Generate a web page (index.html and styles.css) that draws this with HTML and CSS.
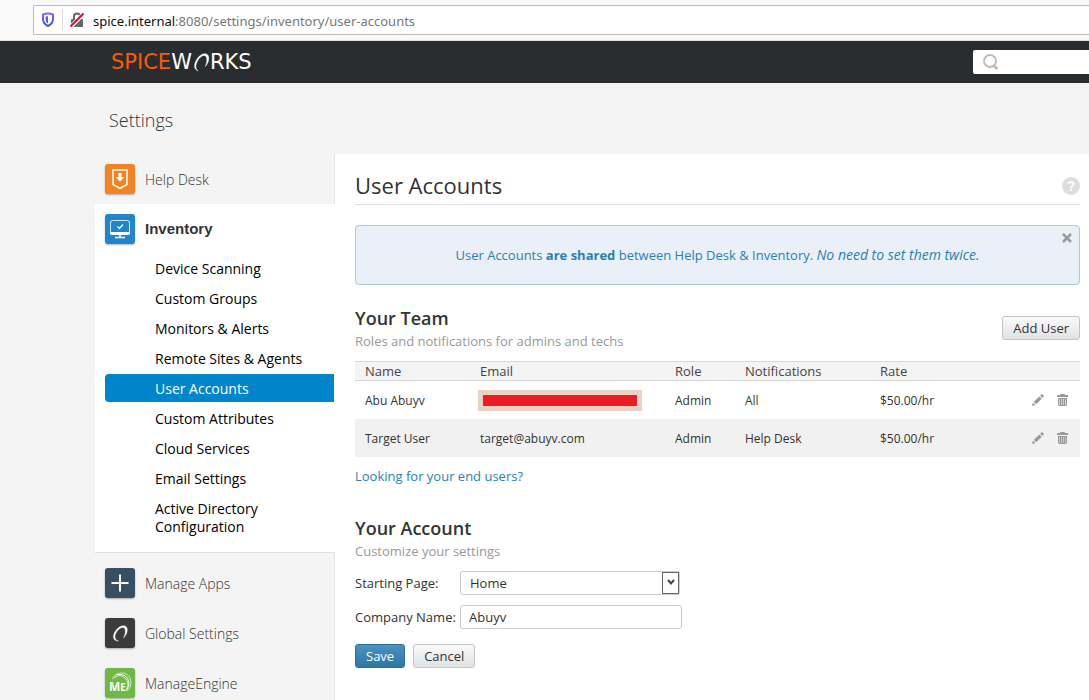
FILE: index.html
```html
<!DOCTYPE html>
<html lang="en">
<head>
<meta charset="utf-8">
<title>User Accounts - Settings</title>
<link rel="stylesheet" href="styles.css">
</head>
<body>
<svg class="defs" aria-hidden="true">
  <symbol id="pencil" viewBox="0 0 12 12"><path d="M0 12l1-3.400 2.400 2.400zM1.800 7.800l5.600-5.400 2.300 2.300-5.500 5.600zM8.200 1.700L9.400.5q.6-.6 1.300 0l.9.9q.6.6 0 1.200L10.400 3.900z"/></symbol>
  <symbol id="trash" viewBox="0 0 11 12"><path d="M3 1q0-1 1-1h3q1 0 1 1h3v2H0V1z"/><path d="M1 4h9v7q0 1-1 1H2q-1 0-1-1z" opacity=".45"/><path d="M1 4h1v7H1zM3 5h1v6H3zM5 5h1v6H5zM7 5h1v6H7zM9 4h1v7H9zM1 4h9v1H1zM2 11h7v1H2z"/></symbol>
</svg>

<div class="browser">
  <div class="address">
    <svg class="shield" viewBox="0 0 14 16" width="14" height="16"><defs><linearGradient id="sg" x2="0" y2="1"><stop stop-color="#9059ff"/><stop offset="1" stop-color="#2b5cd0"/></linearGradient></defs><path d="M2 2.500Q7 .600 12 2.500V7q0 4.500-5 7Q2 11.500 2 7z" fill="none" stroke="url(#sg)" stroke-width="2"/><path d="M7 4v7.500Q4.500 10 4.500 7V4.500z" fill="url(#sg)"/></svg>
    <span class="divider"></span>
    <svg class="lock" viewBox="0 0 14 16" width="14" height="16"><path d="M4 7V4q0-2.500 3-2.500T10 4v3" fill="none" stroke="#666" stroke-width="2"/><rect x="1" y="7" width="12" height="8" rx="1" fill="#666"/><path d="M1 14.500L13.500 2" stroke="#fff" stroke-width="4"/><path d="M.5 14.500L13.500 1.500" stroke="#ff0039" stroke-width="2"/></svg>
    <span class="url"><b>spice.internal</b>:8080/settings/inventory/user-accounts</span>
  </div>
</div>

<header class="topbar">
  <a class="logo" href="#"><span class="spice">SPICE</span>W<svg viewBox="0 0 16 18" width="18" height="20"><path d="M5.500 17C1 16 1.500 10 5 5.500 8.500 .5 14.500 0 15 5c.2 3-1 5.500-3 8 1-3 1.700-5.500 1-8-1-3.500-5-2-7.500 2C3 11 2.500 15.500 5.500 17z" fill="#fff" stroke="#fff" stroke-width=".4"/></svg>RKS</a>
  <label class="search">
    <svg viewBox="0 0 16 16" width="16" height="16" fill="none" stroke="#bbb"><circle cx="7" cy="7" r="6" stroke-width="1.800"/><path d="M10.500 11.500l4 3.500" stroke-width="2.500"/></svg>
    <input type="search" aria-label="Search">
  </label>
</header>

<h1 class="page-title">Settings</h1>

<div class="layout">
  <nav class="sidebar">
    <a class="section" href="#"><span class="tile orange"><svg viewBox="0 0 30 30" width="30" height="30"><path d="M8 6h14v14.500l-7 4-7-4z" fill="none" stroke="#fff" stroke-width="1.500"/><path d="M13.500 9h3v4h3L15 17.500 10.500 13h3z" fill="#fff"/></svg></span>Help Desk</a>
    <div class="group">
      <a class="section current" href="#"><span class="tile blue"><svg viewBox="0 0 30 30" width="30" height="30" fill="none" stroke="#fff"><path d="M5.500 19V9q0-2.500 2-2.500h15q2 0 2 2.500v10" stroke-width="1" opacity=".8"/><path d="M5 18h20v1q0 2-2 2H7q-2 0-2-2z" fill="#fff" stroke="none"/><path d="M12.500 12.500l2 2 3.500-4" stroke-width="1.300"/><path d="M15 21v2.500M10 23.500h10" stroke-width="1.500"/></svg></span>Inventory</a>
      <ul class="submenu">
        <li><a href="#">Device Scanning</a></li>
        <li><a href="#">Custom Groups</a></li>
        <li><a href="#">Monitors &amp; Alerts</a></li>
        <li><a href="#">Remote Sites &amp; Agents</a></li>
        <li><a class="active" href="#">User Accounts</a></li>
        <li><a href="#">Custom Attributes</a></li>
        <li><a href="#">Cloud Services</a></li>
        <li><a href="#">Email Settings</a></li>
        <li><a href="#">Active Directory Configuration</a></li>
      </ul>
    </div>
    <a class="section" href="#"><span class="tile slate"><svg viewBox="0 0 30 30" width="30" height="30"><path d="M15 6.500v17M6.500 15h17" stroke="#fff" stroke-width="2"/></svg></span>Manage Apps</a>
    <a class="section" href="#"><span class="tile dark"><svg viewBox="0 0 30 30" width="30" height="30"><path d="M13.500 23C8 23 7 18 10.500 13c3.500-5.500 10-7 11.500-3 1 3-.5 7-3.500 10 1.500-3 2.500-6.500 1.500-9-1.500-3-6-1-8.500 3-2.500 4-2 8 2 9z" fill="#fff" stroke="#fff" stroke-width=".4"/></svg></span>Global Settings</a>
    <a class="section" href="#"><span class="tile green"><svg viewBox="0 0 30 30" width="30" height="30"><g fill="none" stroke="#fff"><path d="M7 11C12 2 26 3 26 15q0 5-4 8" opacity=".7"/><path d="M9 10q6-5 11 0 5 5 1.500 12" opacity=".8"/><path d="M11 6.500Q23 5 24 15q0 4-3 7.500"/></g><text x="4" y="23" class="me">M<tspan class="me-small">E</tspan></text></svg></span>ManageEngine</a>
  </nav>

  <main class="content">
    <div class="heading">
      <h2>User Accounts</h2>
      <button class="help" type="button" aria-label="Help">?</button>
    </div>

    <div class="notice">
      <p>User Accounts <strong>are shared</strong> between Help Desk &amp; Inventory. <em>No need to set them twice.</em></p>
      <button class="close" type="button" aria-label="Close"><svg viewBox="0 0 10 10" width="10" height="10"><path d="M1 1l8 8M9 1L1 9" stroke="#999" stroke-width="2.500"/></svg></button>
    </div>

    <div class="team-head">
      <div>
        <h3>Your Team</h3>
        <p class="hint">Roles and notifications for admins and techs</p>
      </div>
      <button class="btn" type="button">Add User</button>
    </div>

    <table class="users">
      <colgroup><col class="c-name"><col class="c-email"><col class="c-role"><col class="c-notify"><col class="c-rate"><col class="c-tools"></colgroup>
      <thead><tr><th>Name</th><th>Email</th><th>Role</th><th>Notifications</th><th>Rate</th><th></th></tr></thead>
      <tbody>
        <tr><td>Abu Abuyv</td><td><span class="redacted"></span></td><td>Admin</td><td>All</td><td>$50.00/hr</td>
          <td><div class="tools"><button type="button" aria-label="Edit"><svg width="12" height="12"><use href="#pencil"/></svg></button><button type="button" aria-label="Delete"><svg width="11" height="12"><use href="#trash"/></svg></button></div></td></tr>
        <tr><td>Target User</td><td>target@abuyv.com</td><td>Admin</td><td>Help Desk</td><td>$50.00/hr</td>
          <td><div class="tools"><button type="button" aria-label="Edit"><svg width="12" height="12"><use href="#pencil"/></svg></button><button type="button" aria-label="Delete"><svg width="11" height="12"><use href="#trash"/></svg></button></div></td></tr>
      </tbody>
    </table>
    <a class="end-users" href="#">Looking for your end users?</a>

    <h3>Your Account</h3>
    <p class="hint">Customize your settings</p>
    <form class="account">
      <div class="field">
        <label for="start">Starting Page:</label>
        <span class="select">
          <select id="start"><option>Home</option></select>
          <span class="arrow"><svg viewBox="0 0 8 7" width="8" height="7"><path d="M1 1l3 3.500L7 1" fill="none" stroke="#444" stroke-width="2"/></svg></span>
        </span>
      </div>
      <div class="field">
        <label for="company">Company Name:</label>
        <input id="company" type="text" value="Abuyv">
      </div>
      <div class="actions">
        <button class="btn primary" type="button">Save</button>
        <button class="btn" type="button">Cancel</button>
      </div>
    </form>
  </main>
</div>
</body>
</html>
```
FILE: styles.css
```css
* { box-sizing: border-box; }
body {
  display: flex;
  flex-direction: column;
  height: 100vh;
  margin: 0;
  overflow: hidden;
  background: #f4f4f4;
  color: #333;
  font: 13px/18px "Open Sans", "Noto Sans", sans-serif;
}
h1, h2, h3, p, ul { margin: 0; padding: 0; }
a { text-decoration: none; color: inherit; }
button, input, select { font: inherit; color: inherit; margin: 0; }
button { cursor: pointer; }
svg { display: block; flex: none; }
.defs { position: absolute; width: 0; height: 0; }

.browser {
  flex: none;
  padding: 5px 0 5px 33px;
  background: #f9f9fa;
  border-bottom: 1px solid #e0e0e1;
}
.address {
  display: flex;
  align-items: center;
  height: 30px;
  padding-left: 7px;
  background: #fff;
  border: 1px solid #bbb;
  border-right: 0;
  border-radius: 2px 0 0 2px;
}
.divider { width: 1px; height: 22px; margin: 0 7px; background: #ddd; }
.url { margin: 2px 0 0 9px; color: #777; font: 13px/20px "Noto Sans", sans-serif; white-space: nowrap; }
.url b { color: #0c0c0d; font-weight: 400; }

.topbar {
  display: flex;
  flex: none;
  align-items: center;
  justify-content: space-between;
  height: 42px;
  padding-left: 111px;
  background: #292d30;
}
.logo {
  display: flex;
  align-items: center;
  color: #fff;
  font: 400 21px/20px "DejaVu Sans", sans-serif;
}
.spice { color: #ff5a00; }
.search {
  display: flex;
  align-items: center;
  width: 116px;
  height: 24px;
  padding-left: 10px;
  background: #fff;
  border-radius: 2px 0 0 2px;
}
.search input { width: 80px; border: 0; outline: 0; background: none; }

.page-title {
  flex: none;
  height: 71px;
  padding: 25px 0 0 109px;
  font-size: 18px;
  font-weight: 300;
  line-height: 24px;
}
.layout { display: flex; flex: 1; min-height: 0; padding-left: 95px; }
.sidebar { flex: none; width: 240px; border-right: 1px solid #e4e4e4; }
.section {
  display: flex;
  align-items: center;
  gap: 10px;
  height: 50px;
  padding: 2px 0 0 10px;
  font-size: 14px;
  font-weight: 300;
}
.section.current { padding-top: 0; font: bold 15px/18px "Liberation Sans", Arial, sans-serif; }
.tile { width: 30px; height: 30px; margin-bottom: 2px; border-radius: 3px; box-shadow: 0 1px 2px rgba(0, 0, 0, .3); }
.current .tile { margin-bottom: 0; }
.orange { background: #f58220; }
.blue { background: #2185cc; }
.slate { background: #384e61; }
.dark { background: #3b3b3d; }
.green { background: #6db944; }
.me { fill: #fff; font: bold 12px "Open Sans", sans-serif; }
.me-small { font-size: 10px; }
.group { margin: 0 -1px 5px 0; padding-bottom: 12px; background: #fff; border-bottom: 1px solid #e0e0e0; }
.submenu {
  display: flex;
  flex-direction: column;
  gap: 2px;
  padding: 0 1px 0 10px;
  list-style: none;
  color: #000;
  font-size: 14px;
}
.submenu a { display: block; padding: 6px 50px 4px 50px; border-radius: 4px 0 0 4px; }
.submenu li:not(:last-child) a { padding-right: 10px; }
.submenu .active { background: #0085ca; color: #fff; }

.content { flex: 1; min-width: 0; padding: 16px 9px 0 20px; background: #fff; border-top-left-radius: 4px; }
.heading {
  display: flex;
  align-items: flex-start;
  justify-content: space-between;
  height: 35px;
  margin-bottom: 20px;
  border-bottom: 1px solid #e0e0e0;
}
h2 { font-size: 22px; font-weight: 400; line-height: 30px; }
.help {
  width: 18px;
  height: 18px;
  margin-top: 7px;
  padding: 0;
  border: 0;
  border-radius: 50%;
  background: #ddd;
  color: #fff;
  font: bold 14px/18px "Liberation Sans", Arial, sans-serif;
}
.notice {
  position: relative;
  margin-bottom: 23px;
  padding: 20px;
  background: #e9f0f7;
  border: 1px solid #a9cdd3;
  border-radius: 4px;
  color: #2a80b0;
  text-align: center;
}
.notice em { font-size: 14px; }
.close { position: absolute; top: 7px; right: 7px; padding: 0; border: 0; background: none; }
.team-head { display: flex; align-items: flex-start; justify-content: space-between; margin-bottom: 11px; }
.team-head .btn { margin-top: 8px; }
h3 { font-size: 18px; font-weight: 600; line-height: 20px; margin-bottom: 4px; }
.hint { color: #999; }
.btn {
  height: 24px;
  padding: 0 10px;
  border: 1px solid #c4c4c4;
  border-radius: 3px;
  background: linear-gradient(#fafafa, #e1e2e4);
  line-height: 20px;
}
.btn.primary { border-color: #2a71a0; background: linear-gradient(#4a92bf, #2c77a6); color: #fff; }

.users { width: 100%; table-layout: fixed; border-collapse: collapse; }
.c-name { width: 115px; }
.c-email { width: 195px; }
.c-role { width: 70px; }
.c-notify { width: 135px; }
.c-rate { width: 110px; }
.users th {
  padding: 0 0 0 10px;
  background: #f4f4f4;
  border: solid #d8d8d8;
  border-width: 1px 0;
  color: #444;
  font-weight: 400;
  line-height: 18px;
  text-align: left;
}
.users td { height: 38px; padding: 2px 0 0 10px; font-size: 12px; }
.users tbody tr:nth-child(even) { background: #f1f1f1; }
.redacted { display: block; width: 164px; height: 21px; margin-left: -2px; background: #ed1c24; border: 5px solid #ead3c4; }
.tools { display: flex; justify-content: flex-end; gap: 13px; padding: 0 12px 2px 0; }
.tools button { padding: 0; border: 0; background: none; }
.tools svg { fill: #999; }
.end-users { display: block; margin: 10px 0 33px; color: #2a80b0; }

.account { display: flex; flex-direction: column; gap: 10px; margin-top: 11px; }
.field { display: flex; align-items: center; }
.field label { flex: none; width: 105px; white-space: nowrap; }
.field input, .field select {
  width: 222px;
  height: 24px;
  padding: 0 8px;
  background: #fff;
  border: 1px solid #ccc;
  border-radius: 3px;
}
.select { position: relative; }
.field select { display: block; width: 220px; padding-left: 9px; appearance: none; }
.arrow {
  position: absolute;
  top: 1px;
  right: 1px;
  display: grid;
  place-items: center;
  width: 17px;
  height: 22px;
  background: #fff;
  border: 1px solid #666;
  pointer-events: none;
}
.actions { display: flex; gap: 8px; margin-top: 5px; }
```
